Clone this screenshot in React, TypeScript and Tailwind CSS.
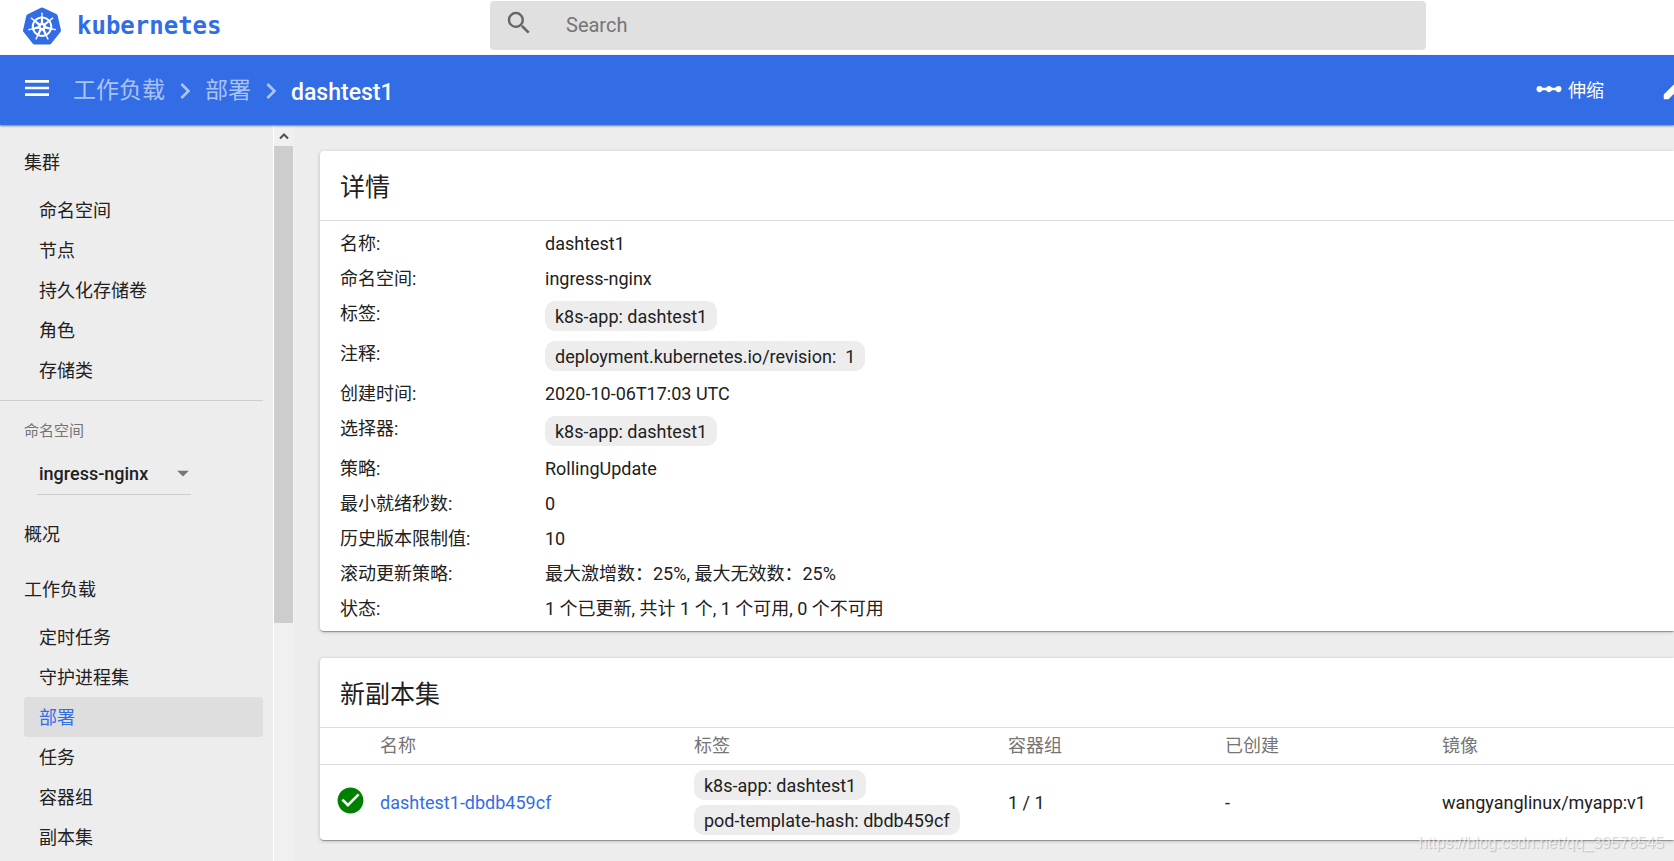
import { ReactNode } from 'react';
import { SiKubernetes } from 'react-icons/si';
import {
    MdArrowDropDown,
    MdCheckCircle,
    MdChevronRight,
    MdEdit,
    MdLinearScale,
    MdMenu,
    MdSearch,
} from 'react-icons/md';
import clsx from 'clsx';

interface Detail {
    label: string;
    value: string;
    chip?: boolean;
}

const CLUSTER_ITEMS = ['命名空间', '节点', '持久化存储卷', '角色', '存储类'];
const WORKLOAD_ITEMS = ['定时任务', '守护进程集', '部署', '任务', '容器组', '副本集'];

const DETAILS: Detail[] = [
    { label: '名称:', value: 'dashtest1' },
    { label: '命名空间:', value: 'ingress-nginx' },
    { label: '标签:', value: 'k8s-app: dashtest1', chip: true },
    { label: '注释:', value: 'deployment.kubernetes.io/revision:  1', chip: true },
    { label: '创建时间:', value: '2020-10-06T17:03 UTC' },
    { label: '选择器:', value: 'k8s-app: dashtest1', chip: true },
    { label: '策略:', value: 'RollingUpdate' },
    { label: '最小就绪秒数:', value: '0' },
    { label: '历史版本限制值:', value: '10' },
    { label: '滚动更新策略:', value: '最大激增数：25%, 最大无效数：25%' },
    { label: '状态:', value: '1 个已更新, 共计 1 个, 1 个可用, 0 个不可用' },
];

const Chip = ({ children }: { children: ReactNode }) => (
    <span className="inline-block h-[30px] whitespace-pre rounded-[10px] bg-[#ededed] px-2.5 leading-[32px]">
        {children}
    </span>
);

const Card = ({ title, children }: { title: string; children: ReactNode }) => (
    <section className="rounded-l bg-white shadow-[0_2px_1px_-1px_rgba(0,0,0,0.2),0_1px_1px_rgba(0,0,0,0.14),0_1px_4px_rgba(0,0,0,0.2)]">
        <h2 className="flex h-[70px] items-center border-b border-[#dedede] px-5 pt-1 text-[25px]">{title}</h2>
        {children}
    </section>
);

const NavHeading = ({ children }: { children: ReactNode }) => (
    <a href="#" className="flex h-[55px] items-center px-6">
        {children}
    </a>
);

const NavList = ({ items, active }: { items: string[]; active?: string }) => (
    <ul className="pl-6">
        {items.map((item) => (
            <li key={item}>
                <a
                    href="#"
                    className={clsx(
                        'flex h-10 items-center rounded px-[15px]',
                        item === active && 'bg-[#dedede] text-[#326de6]',
                    )}
                >
                    {item}
                </a>
            </li>
        ))}
    </ul>
);

const TopBar = () => (
    <header className="flex h-[55px] shrink-0 bg-white">
        <a href="#" className="flex w-[490px] shrink-0 items-center pb-1 pl-[23px] text-[#326de6]">
            <SiKubernetes className="h-[38px] w-[38px]" />
            <span className="pl-4 font-['DejaVu_Sans_Mono',monospace] text-2xl font-bold">kubernetes</span>
        </a>
        <div className="mt-px mr-[248px] flex h-[49px] flex-1 items-center rounded bg-[#e0e0e0] pb-0.5 pl-[14px]">
            <MdSearch className="mb-1 h-[30px] w-[30px] text-[#666]" />
            <input
                type="search"
                aria-label="Search"
                placeholder="Search"
                className="ml-8 flex-1 bg-transparent text-xl outline-none placeholder:text-[#757575]"
            />
        </div>
    </header>
);

const ActionBar = () => (
    <div className="relative z-10 flex h-[70px] shrink-0 items-center overflow-hidden bg-[#326de6] pl-[21px] text-white shadow-[0_1px_2px_rgba(0,0,0,0.5)]">
        <button type="button" aria-label="Menu" className="mb-1">
            <MdMenu className="h-8 w-8" />
        </button>
        <nav className="flex flex-1 items-center gap-1 pt-0.5 pl-5 text-[23px]">
            <a href="#" className="text-white/60">工作负载</a>
            <MdChevronRight className="h-8 w-8 text-white/60" />
            <a href="#" className="text-white/60">部署</a>
            <MdChevronRight className="h-8 w-8 text-white/60" />
            <span className="pt-1 font-medium">dashtest1</span>
        </nav>
        <button type="button" className="mr-14 flex items-center gap-1">
            <MdLinearScale className="mb-0.5 h-[30px] w-[30px]" />
            伸缩
        </button>
        <button type="button" aria-label="Edit" className="-mr-4 mb-1 shrink-0">
            <MdEdit className="h-[30px] w-[30px]" />
        </button>
    </div>
);

const Sidebar = () => (
    <aside className="flex w-[294px] shrink-0">
        <nav className="flex-1 overflow-hidden pt-2.5 pr-2.5">
            <NavHeading>集群</NavHeading>
            <NavList items={CLUSTER_ITEMS} />
            <div className="mt-2.5 border-t border-[#cecece] pt-5 pb-3">
                <label htmlFor="namespace" className="block px-6 text-[15px] leading-5 text-[#757575]">
                    命名空间
                </label>
                <div className="relative mt-3 ml-[37px] w-[154px] border-b border-[#cecece]">
                    <select
                        id="namespace"
                        className="block h-[41px] w-full appearance-none bg-transparent pl-0.5 font-medium outline-none"
                    >
                        <option>ingress-nginx</option>
                    </select>
                    <MdArrowDropDown className="pointer-events-none absolute top-1.5 -right-1.5 h-7 w-7 text-[#757575]" />
                </div>
            </div>
            <NavHeading>概况</NavHeading>
            <NavHeading>工作负载</NavHeading>
            <NavList items={WORKLOAD_ITEMS} active="部署" />
        </nav>
        <div className="flex w-[21px] shrink-0 flex-col border-l border-white bg-[#f0f0f0]">
            <div className="flex h-[21px] shrink-0 items-center justify-center pr-px">
                <svg viewBox="0 0 10 8" className="h-2 w-2.5" fill="none" stroke="#505050" strokeWidth="2">
                    <path d="M1 6.5 5 2.5 9 6.5" />
                </svg>
            </div>
            <div className="min-h-0 flex-1">
                <div className="mr-px h-2/3 bg-[#cdcdcd]" />
            </div>
        </div>
    </aside>
);

const DetailsCard = () => (
    <Card title="详情">
        <dl className="py-[5px]">
            {DETAILS.map(({ label, value, chip }) => (
                <div key={label} className="flex px-5">
                    <dt className="w-[205px] shrink-0 leading-[35px]">{label}</dt>
                    {chip ? (
                        <dd className="flex h-10 items-center">
                            <Chip>{value}</Chip>
                        </dd>
                    ) : (
                        <dd className="leading-[35px]">{value}</dd>
                    )}
                </div>
            ))}
        </dl>
    </Card>
);

const ReplicaSetCard = () => (
    <Card title="新副本集">
        <table className="w-full table-fixed text-left">
            <thead>
                <tr className="h-9 border-b border-[#dedede] text-[#757575]">
                    <th className="w-[60px]" aria-label="Status" />
                    <th className="w-[314px] font-normal">名称</th>
                    <th className="w-[314px] font-normal">标签</th>
                    <th className="w-[217px] font-normal">容器组</th>
                    <th className="w-[217px] font-normal">已创建</th>
                    <th className="font-normal">镜像</th>
                </tr>
            </thead>
            <tbody>
                <tr>
                    <td className="pl-[15px]">
                        <MdCheckCircle className="mb-1 h-[31px] w-[31px] text-[#008000]" />
                    </td>
                    <td>
                        <a href="#" className="text-[#326de6]">dashtest1-dbdb459cf</a>
                    </td>
                    <td>
                        <div className="flex flex-col items-start gap-[5px] py-[5px]">
                            <Chip>k8s-app: dashtest1</Chip>
                            <Chip>pod-template-hash: dbdb459cf</Chip>
                        </div>
                    </td>
                    <td>1 / 1</td>
                    <td>-</td>
                    <td>wangyanglinux/myapp:v1</td>
                </tr>
            </tbody>
        </table>
    </Card>
);

export default function App() {
    return (
        <div className="relative flex h-screen flex-col overflow-hidden bg-[#ededed] font-[Roboto,'Noto_Sans_CJK_SC',sans-serif] text-[18px] text-[#212121]">
            <TopBar />
            <ActionBar />
            <div className="flex min-h-0 flex-1">
                <Sidebar />
                <main className="flex min-w-0 flex-1 flex-col gap-[27px] pt-[26px] pl-[26px]">
                    <DetailsCard />
                    <ReplicaSetCard />
                </main>
            </div>
            <span className="pointer-events-none absolute right-2.5 bottom-1.5 font-['Liberation_Sans',sans-serif] text-base text-white/60 [text-shadow:1px_1px_1px_rgba(0,0,0,0.2)]">
                https://blog.csdn.net/qq_39578545
            </span>
        </div>
    );
}
